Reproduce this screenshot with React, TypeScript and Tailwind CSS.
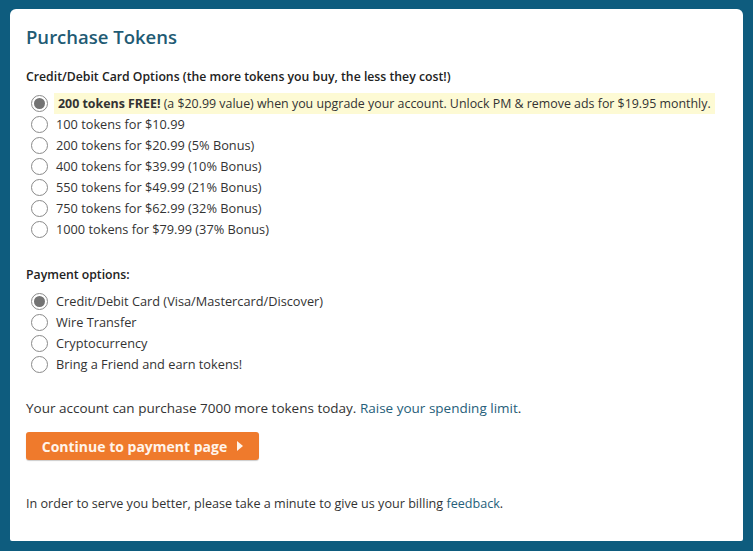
import { useState } from "react";

const tokenOptions = [
  "100 tokens for $10.99",
  "200 tokens for $20.99 (5% Bonus)",
  "400 tokens for $39.99 (10% Bonus)",
  "550 tokens for $49.99 (21% Bonus)",
  "750 tokens for $62.99 (32% Bonus)",
  "1000 tokens for $79.99 (37% Bonus)",
];

const paymentOptions = [
  "Credit/Debit Card (Visa/Mastercard/Discover)",
  "Wire Transfer",
  "Cryptocurrency",
  "Bring a Friend and earn tokens!",
];

function Radio({ checked }: { checked: boolean }) {
  return (
    <span className="flex h-[17px] w-[17px] shrink-0 items-center justify-center rounded-full border border-[#8a8a8a] bg-white">
      {checked && <span className="h-[11px] w-[11px] rounded-full bg-[#737373]" />}
    </span>
  );
}

export default function App() {
  const [token, setToken] = useState(-1);
  const [payment, setPayment] = useState(0);

  return (
    <div
      className="h-[551px] w-[753px] bg-[#0e5c7e] px-[10px] pt-[9px]"
      style={{ fontFamily: '"Open Sans", "Noto Sans", sans-serif' }}
    >
      <div className="h-[532px] rounded-t-[6px] rounded-b-[2px] bg-white px-4 pt-[16px] text-[#333]">
        <h1 className="text-[18.5px] leading-[24px] font-semibold text-[#1f5b74]">Purchase Tokens</h1>

        <p className="mt-[19px] text-[12.25px] leading-[18px] font-semibold text-[#222]">
          Credit/Debit Card Options (the more tokens you buy, the less they cost!)
        </p>

        <ul className="mt-[7px] text-[12.75px] leading-[21px]">
          <li className="flex items-center gap-[6px] pl-[5px]" onClick={() => setToken(-1)}>
            <Radio checked={token === -1} />
            <span className="bg-[#fdfad4] pr-1 pl-[4px] text-[12.4px] whitespace-nowrap">
              <b className="font-bold text-[#333]">200 tokens FREE!</b> (a $20.99 value) when you upgrade your account. Unlock PM &amp; remove ads for $19.95 monthly.
            </span>
          </li>
          {tokenOptions.map((label, i) => (
            <li key={label} className="flex items-center gap-[8px] pl-[5px]" onClick={() => setToken(i)}>
              <Radio checked={token === i} />
              <span>{label}</span>
            </li>
          ))}
        </ul>

        <p className="mt-[26px] text-[12.25px] leading-[18px] font-semibold text-[#222]">Payment options:</p>

        <ul className="mt-[7px] text-[12.75px] leading-[21px]">
          {paymentOptions.map((label, i) => (
            <li key={label} className="flex items-center gap-[8px] pl-[5px]" onClick={() => setPayment(i)}>
              <Radio checked={payment === i} />
              <span>{label}</span>
            </li>
          ))}
        </ul>

        <p className="mt-[23px] text-[13.5px] leading-[20px] text-[#333]">
          Your account can purchase 7000 more tokens today.{" "}
          <a href="#" className="text-[#26607a]">Raise your spending limit</a>.
        </p>

        <button className="mt-[14px] flex h-[28px] w-[233px] items-center justify-center gap-[10px] rounded-[3px] bg-[#ef7a2c] text-[14px] font-bold text-[#fff4ea] shadow-[0_1px_1px_rgba(0,0,0,0.2)]">
          Continue to payment page
          <span className="h-0 w-0 border-y-[5px] border-l-[6px] border-y-transparent border-l-[#fff4ea]" />
        </button>

        <p className="mt-[35px] text-[12.6px] leading-[18px] text-[#333]">
          In order to serve you better, please take a minute to give us your billing{" "}
          <a href="#" className="text-[#26607a]">feedback</a>.
        </p>
      </div>
    </div>
  );
}
